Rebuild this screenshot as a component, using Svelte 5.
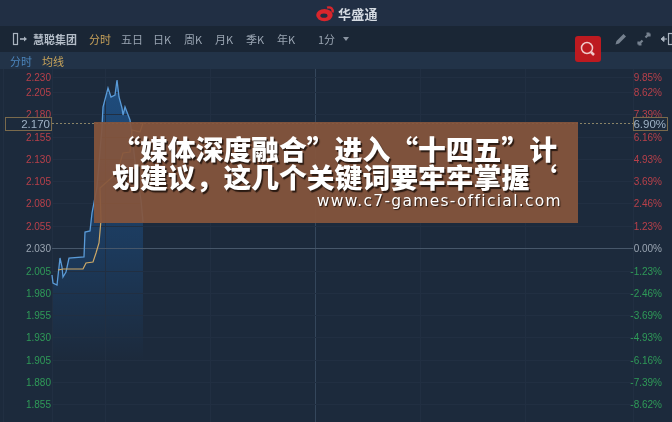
<script>
  const vLines = [52, 105, 210, 315, 420, 525, 633];
  const rows = [
    { y: 77, l: '2.230', r: '9.85%', t: 'up' },
    { y: 92, l: '2.205', r: '8.62%', t: 'up' },
    { y: 114, l: '2.180', r: '7.39%', t: 'up' },
    { y: 137, l: '2.155', r: '6.16%', t: 'up' },
    { y: 159, l: '2.130', r: '4.93%', t: 'up' },
    { y: 181, l: '2.105', r: '3.69%', t: 'up' },
    { y: 203, l: '2.080', r: '2.46%', t: 'up' },
    { y: 226, l: '2.055', r: '1.23%', t: 'up' },
    { y: 248, l: '2.030', r: '0.00%', t: 'flat' },
    { y: 271, l: '2.005', r: '-1.23%', t: 'down' },
    { y: 293, l: '1.980', r: '-2.46%', t: 'down' },
    { y: 315, l: '1.955', r: '-3.69%', t: 'down' },
    { y: 337, l: '1.930', r: '-4.93%', t: 'down' },
    { y: 360, l: '1.905', r: '-6.16%', t: 'down' },
    { y: 382, l: '1.880', r: '-7.39%', t: 'down' },
    { y: 404, l: '1.855', r: '-8.62%', t: 'down' }
  ];
  const tabs = ['分时', '五日', '日K', '周K', '月K', '季K', '年K'];
  const blue = '52,275 53,283 57,285 60,258 62,267 63,277 66,272 69,258 84,257 85,232 90,231 92,213 97,187 102,127 103,107 108,88 111,97 115,95 117,80 119,97 122,108 123,115 125,107 130,120 132,135 136,170 141,200 143,222';
  const gold = '58,270 63,269 83,269 86,263 93,262 96,253 99,243 101,220 100,188 117,173 123,153 130,152 132,130 140,132 143,123';
  const area = `52,360 ${blue} 143,360`;
</script>

<div class="page">
  <header class="top">
    <svg class="logo" viewBox="0 0 18 17" width="19" height="18">
      <ellipse cx="8" cy="10.500" rx="7.800" ry="5.800" fill="#d8262c" />
      <ellipse cx="7.500" cy="11" rx="3.400" ry="2" fill="#1f2d41" />
      <path d="M10.500 3.500c3.500-1.200 5.800 1 5.200 4.500" fill="none" stroke="#d8262c" stroke-width="2.200" />
    </svg>
    <span class="brand">华盛通</span>
  </header>

  <nav class="toolbar">
    <svg class="ic-left" viewBox="0 0 16 14" width="16" height="14">
      <rect x="1.500" y="1.500" width="4" height="11" fill="none" stroke="#aab4c0" stroke-width="1.200" />
      <path d="M8 7h4" stroke="#aab4c0" stroke-width="1.600" />
      <path d="M12 4.500l3 2.500-3 2.500z" fill="#aab4c0" />
    </svg>
    <span class="stock">慧聪集团</span>
    <div class="tabs">
      {#each tabs as t, i}
        <span class:active={i === 0}>{t}</span>
      {/each}
    </div>
    <span class="period">1分</span>
    <span class="caret"></span>
    <div class="tools">
      <svg viewBox="0 0 14 14" width="14" height="14">
        <path d="M1.500 12.500l1-3.500 7-7 2.500 2.500-7 7z" fill="#76818f" />
      </svg>
      <svg viewBox="0 0 14 14" width="14" height="14">
        <path d="M8.500 5.500l3-3M12.500 1.500H9.500M12.500 1.500v3M5.500 8.500l-3 3M1.500 12.500h3M1.500 12.500v-3" stroke="#76818f" stroke-width="2.200" fill="none" />
      </svg>
      <svg viewBox="0 0 14 14" width="14" height="14">
        <path d="M1 7l3-2.500v5z M3 7h4" fill="#aab4c0" stroke="#aab4c0" />
        <rect x="8.500" y="1.500" width="4" height="11" fill="none" stroke="#aab4c0" stroke-width="1.200" />
      </svg>
    </div>
  </nav>

  <div class="legend">
    <span class="time">分时</span>
    <span class="avg">均线</span>
  </div>

  <button class="search" aria-label="搜索">
    <svg viewBox="0 0 26 26" width="26" height="26">
      <circle cx="12" cy="12" r="5.500" fill="none" stroke="#f0c8c8" stroke-width="1.500" />
      <path d="M16 16l3 3" stroke="#f0c8c8" stroke-width="2.500" />
    </svg>
  </button>

  <section class="chart">
    <svg viewBox="0 69 672 353" width="672" height="353">
      <defs>
        <linearGradient id="fill" x1="0" y1="0" x2="0" y2="1">
          <stop offset="0" stop-color="#1f4d7e" />
          <stop offset="0.6" stop-color="#1c3a5c" />
          <stop offset="1" stop-color="#1c2a3c" />
        </linearGradient>
      </defs>
      <polygon points={area} fill="url(#fill)" />
      <path d="M3.500 69V422" class="grid" />
      {#each vLines as x}
        <path d="M{x + 0.5} 69V422" class={x === 315 ? 'grid strong' : 'grid'} />
      {/each}
      {#each rows as row}
        <path d="M52 {row.y + 0.5}H633" class={row.t === 'flat' ? 'zero' : 'grid'} />
      {/each}
      <path d="M52 123.500H633" class="dash" />
      <polyline points={blue} class="line-blue" />
      <polyline points={gold} class="line-gold" />
      {#each rows as row}
        <text x="51" y={row.y + 4} text-anchor="end" class={row.t}>{row.l}</text>
        <text x="662" y={row.y + 4} text-anchor="end" class={row.t}>{row.r}</text>
      {/each}
      <rect x="5.500" y="117.500" width="46" height="13" class="box" />
      <text x="50" y="128" text-anchor="end" class="cur">2.170</text>
      <rect x="633.500" y="117.500" width="34" height="13" class="box" />
      <text x="666" y="128" text-anchor="end" class="cur">6.90%</text>
    </svg>
  </section>

  <aside class="banner" lang="zh-CN">
    <p class="headline">“媒体深度融合”进入“十四五”计</p>
    <p class="headline">划建议&#xFF0C;这几个关键词要牢牢掌握‘</p>
    <p class="url">www.c7-games-official.com</p>
  </aside>
</div>

<style>
  :global(body) {
    margin: 0;
    background: #1c2a3c;
  }
  .page {
    position: relative;
    width: 672px;
    height: 422px;
    overflow: hidden;
    display: flex;
    flex-direction: column;
    font-family: "Noto Sans CJK SC", "Noto Sans", sans-serif;
    filter: blur(0.6px);
  }
  .top {
    height: 26px;
    background: #212f44;
    display: flex;
    align-items: center;
    padding-left: 316px;
    gap: 3px;
  }
  .brand {
    color: #d5dbe2;
    font-size: 13px;
    font-weight: 700;
    letter-spacing: 0.2px;
  }
  .toolbar {
    height: 26px;
    background: #1a2635;
    display: flex;
    align-items: center;
    padding-left: 12px;
    font-size: 11px;
    color: #9aa5b2;
  }
  .ic-left {
    margin-right: 5px;
  }
  .stock {
    width: 56px;
    color: #b4bdc8;
    font-weight: 700;
  }
  .tabs {
    display: flex;
    gap: 10px;
  }
  .tabs span {
    min-width: 21px;
  }
  .tabs .active {
    color: #c8a25a;
  }
  .period {
    margin-left: 20px;
  }
  .caret {
    margin-left: 8px;
    border: 3.500px solid transparent;
    border-top: 4px solid #8a94a1;
    border-bottom: 0;
  }
  .tools {
    margin-left: auto;
    display: flex;
    gap: 9px;
    margin-right: -2px;
  }
  .legend {
    height: 17px;
    background: #223348;
    display: flex;
    align-items: center;
    gap: 10px;
    padding-left: 10px;
    font-size: 11px;
  }
  .time {
    color: #4c86bd;
  }
  .avg {
    color: #c9a45a;
  }
  .search {
    position: absolute;
    left: 575px;
    top: 36px;
    width: 26px;
    height: 26px;
    padding: 0;
    border: 0;
    border-radius: 3px;
    background: #bd1a20;
  }
  .search svg {
    display: block;
  }
  .chart {
    flex: 1;
    background: #1c2a3c;
  }
  .chart svg {
    display: block;
  }
  .grid {
    stroke: #212f42;
    stroke-width: 1;
  }
  .strong {
    stroke: #34465b;
  }
  .zero {
    stroke: #47576a;
    stroke-width: 1;
  }
  .dash {
    stroke: #8a8468;
    stroke-width: 1;
    stroke-dasharray: 2 2;
  }
  .line-blue {
    fill: none;
    stroke: #5a9bd8;
    stroke-width: 1.300;
  }
  .line-gold {
    fill: none;
    stroke: #cda968;
    stroke-width: 1.200;
  }
  text {
    font-family: "Liberation Sans", sans-serif;
    font-size: 10px;
  }
  .up {
    fill: #b8404a;
  }
  .down {
    fill: #2f9a58;
  }
  .flat {
    fill: #9aa5b2;
  }
  .cur {
    fill: #9fb2c6;
    font-size: 11.500px;
  }
  .box {
    fill: #1c2a3c;
    stroke: #7a6a4c;
    stroke-width: 1;
  }
  .banner {
    position: absolute;
    left: 94px;
    top: 122px;
    width: 484px;
    height: 101px;
    box-sizing: border-box;
    padding: 13px 21px 0 0;
    background: rgba(133, 85, 60, 0.93);
    display: flex;
    flex-direction: column;
    align-items: flex-end;
    color: #fff;
  }
  .banner p {
    margin: 0;
    white-space: nowrap;
  }
  .headline {
    font-size: 27.800px;
    line-height: 27.500px;
    font-weight: 900;
    text-shadow: 1.500px 1.500px 1px #2a1a12;
  }
  .banner .url {
    margin: 1px -5px 0 0;
    font-family: "DejaVu Sans", sans-serif;
    font-size: 15.500px;
    line-height: 20px;
    letter-spacing: 1.300px;
    text-shadow: 1px 1px 1px #2a1a12;
  }
</style>
